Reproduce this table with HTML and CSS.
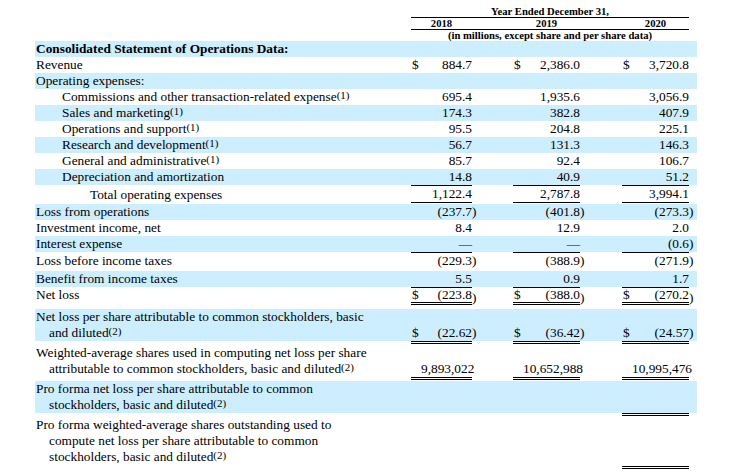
FILE: index.html
```html
<!DOCTYPE html>
<html lang="en">
<head>
<meta charset="utf-8">
<title>Consolidated Statement of Operations Data</title>
<link rel="stylesheet" href="styles.css">
</head>
<body>
<table class="fin">
  <colgroup>
    <col class="c-label"><col class="c-cur"><col class="c-num1"><col class="c-par"><col class="c-sp1">
    <col class="c-cur"><col class="c-num"><col class="c-par"><col class="c-sp2">
    <col class="c-cur"><col class="c-num"><col class="c-par">
  </colgroup>
  <thead>
    <tr class="h1">
      <td></td><th colspan="10" class="hl">Year Ended December 31,</th><td></td>
    </tr>
    <tr class="h2">
      <td></td>
      <th colspan="2" class="hl">2018</th><td colspan="2" class="hl"></td>
      <th colspan="2" class="hl">2019</th><td colspan="2" class="hl"></td>
      <th colspan="2" class="hl">2020</th><td></td>
    </tr>
    <tr class="h3">
      <td></td><th colspan="10">(in millions, except share and per share data)</th><td></td>
    </tr>
  </thead>
  <tbody>
    <tr class="sh">
      <td class="lbl b">Consolidated Statement of Operations Data:</td><td colspan="11"></td>
    </tr>
    <tr>
      <td class="lbl">Revenue</td>
      <td class="cur">$</td><td class="num">884.7</td><td></td><td></td>
      <td class="cur">$</td><td class="num">2,386.0</td><td></td><td></td>
      <td class="cur">$</td><td class="num">3,720.8</td><td></td>
    </tr>
    <tr class="sh">
      <td class="lbl">Operating expenses:</td><td colspan="11"></td>
    </tr>
    <tr>
      <td class="lbl i2">Commissions and other transaction-related expense<span class="fn">(1)</span></td>
      <td></td><td class="num">695.4</td><td></td><td></td>
      <td></td><td class="num">1,935.6</td><td></td><td></td>
      <td></td><td class="num">3,056.9</td><td></td>
    </tr>
    <tr class="sh">
      <td class="lbl i2">Sales and marketing<span class="fn">(1)</span></td>
      <td></td><td class="num">174.3</td><td></td><td></td>
      <td></td><td class="num">382.8</td><td></td><td></td>
      <td></td><td class="num">407.9</td><td></td>
    </tr>
    <tr>
      <td class="lbl i2">Operations and support<span class="fn">(1)</span></td>
      <td></td><td class="num">95.5</td><td></td><td></td>
      <td></td><td class="num">204.8</td><td></td><td></td>
      <td></td><td class="num">225.1</td><td></td>
    </tr>
    <tr class="sh">
      <td class="lbl i2">Research and development<span class="fn">(1)</span></td>
      <td></td><td class="num">56.7</td><td></td><td></td>
      <td></td><td class="num">131.3</td><td></td><td></td>
      <td></td><td class="num">146.3</td><td></td>
    </tr>
    <tr>
      <td class="lbl i2">General and administrative<span class="fn">(1)</span></td>
      <td></td><td class="num">85.7</td><td></td><td></td>
      <td></td><td class="num">92.4</td><td></td><td></td>
      <td></td><td class="num">106.7</td><td></td>
    </tr>
    <tr class="sh">
      <td class="lbl i2">Depreciation and amortization</td>
      <td></td><td class="num">14.8</td><td></td><td></td>
      <td></td><td class="num">40.9</td><td></td><td></td>
      <td></td><td class="num">51.2</td><td></td>
    </tr>
    <tr>
      <td class="lbl i4">Total operating expenses</td>
      <td class="t1 b1"></td><td class="num t1 b1">1,122.4</td><td></td><td></td>
      <td class="t1 b1"></td><td class="num t1 b1">2,787.8</td><td></td><td></td>
      <td class="t1 b1"></td><td class="num t1 b1">3,994.1</td><td></td>
    </tr>
    <tr class="sh g1">
      <td class="lbl">Loss from operations</td>
      <td></td><td class="num">(237.7</td><td class="par">)</td><td></td>
      <td></td><td class="num">(401.8</td><td class="par">)</td><td></td>
      <td></td><td class="num">(273.3</td><td class="par">)</td>
    </tr>
    <tr>
      <td class="lbl">Investment income, net</td>
      <td></td><td class="num">8.4</td><td></td><td></td>
      <td></td><td class="num">12.9</td><td></td><td></td>
      <td></td><td class="num">2.0</td><td></td>
    </tr>
    <tr class="sh">
      <td class="lbl">Interest expense</td>
      <td></td><td class="num">—</td><td></td><td></td>
      <td></td><td class="num">—</td><td></td><td></td>
      <td></td><td class="num">(0.6</td><td class="par">)</td>
    </tr>
    <tr class="pb2">
      <td class="lbl">Loss before income taxes</td>
      <td class="t1"></td><td class="num t1">(229.3</td><td class="par">)</td><td></td>
      <td class="t1"></td><td class="num t1">(388.9</td><td class="par">)</td><td></td>
      <td class="t1"></td><td class="num t1">(271.9</td><td class="par">)</td>
    </tr>
    <tr class="sh">
      <td class="lbl">Benefit from income taxes</td>
      <td></td><td class="num">5.5</td><td></td><td></td>
      <td></td><td class="num">0.9</td><td></td><td></td>
      <td></td><td class="num">1.7</td><td></td>
    </tr>
    <tr class="net">
      <td class="lbl">Net loss</td>
      <td class="cur t1 bd">$</td><td class="num t1 bd">(223.8</td><td class="par">)</td><td></td>
      <td class="cur t1 bd">$</td><td class="num t1 bd">(388.0</td><td class="par">)</td><td></td>
      <td class="cur t1 bd">$</td><td class="num t1 bd">(270.2</td><td class="par">)</td>
    </tr>
    <tr class="sh g4">
      <td class="lbl hang">Net loss per share attributable to common stockholders, basic and diluted<span class="fn">(2)</span></td>
      <td class="cur">$</td><td class="num">(22.62</td><td class="par">)</td><td></td>
      <td class="cur">$</td><td class="num">(36.42</td><td class="par">)</td><td></td>
      <td class="cur">$</td><td class="num">(24.57</td><td class="par">)</td>
    </tr>
    <tr class="wa">
      <td class="lbl hang">Weighted-average shares used in computing net loss per share attributable to common stockholders, basic and diluted<span class="fn">(2)</span></td>
      <td class="td bd"></td><td class="num td bd">9,893,022</td><td></td><td></td>
      <td class="td bd"></td><td class="num td bd">10,652,988</td><td></td><td></td>
      <td class="td bd"></td><td class="num td bd">10,995,476</td><td></td>
    </tr>
    <tr class="sh g1">
      <td class="lbl hang">Pro forma net loss per share attributable to common stockholders, basic and diluted<span class="fn">(2)</span></td>
      <td></td><td></td><td></td><td></td>
      <td></td><td></td><td></td><td></td>
      <td></td><td></td><td></td>
    </tr>
    <tr class="wa last">
      <td class="lbl hang">Pro forma weighted-average shares outstanding used to compute net loss per share attributable to common stockholders, basic and diluted<span class="fn">(2)</span></td>
      <td></td><td></td><td></td><td></td>
      <td></td><td></td><td></td><td></td>
      <td class="td bd"></td><td class="num td bd"></td><td></td>
    </tr>
  </tbody>
</table>
</body>
</html>
```

FILE: styles.css
```css
html, body {
  margin: 0;
  padding: 0;
  background: #ffffff;
}

body {
  font-family: "Liberation Serif", "Times New Roman", serif;
  font-size: 13.33px;
  color: #000000;
}

.fin {
  margin: 5px 0 0 35px;
  width: 662px;
  table-layout: fixed;
  border-collapse: separate;
  border-spacing: 0;
}

.c-label { width: 376px; }
.c-cur { width: 10px; }
.c-num1 { width: 51px; }
.c-num { width: 57px; }
.c-par { width: 8px; }
.c-sp1 { width: 33px; }
.c-sp2 { width: 34px; }

.fin td,
.fin th {
  padding: 0;
  line-height: 16px;
  vertical-align: bottom;
  white-space: nowrap;
}

/* header */
.fin thead th {
  font-size: 10.67px;
  font-weight: bold;
  text-align: center;
}

.h1 th, .h1 td { line-height: 12px; }
.h2 th, .h2 td, .h3 th, .h3 td { line-height: 11px; }

.hl { border-bottom: 1px solid #000; }

/* body cells */
.lbl {
  padding-left: 1px !important;
  padding-right: 38px !important;
  white-space: normal !important;
}

.b { font-weight: bold; }
.i2 { padding-left: 27px !important; }
.i4 { padding-left: 55px !important; }

.hang {
  padding-left: 14px !important;
  text-indent: -13px;
}

.num {
  text-align: right;
}

.cur {
  text-align: left;
  padding-left: 1px !important;
}

.par {
  text-align: left;
}

.fn {
  font-size: 11px;
  vertical-align: 2px;
  line-height: 12px;
}

/* shading */
.sh > td {
  background: #cceeff;
  background-clip: padding-box;
}

.g1 > td { border-top: 1px solid transparent; }
.g4 > td { border-top: 4px solid transparent; }

/* rules */
.t1 { border-top: 1px solid #000; }
.b1 { border-bottom: 1px solid #000; }
.td { border-top: 3px double #000; }
.bd { border-bottom: 3px double #000; }

.pb2 > td { padding-bottom: 2px; }

.net > td { line-height: 14px; }
.net > td.lbl { padding-top: 1px; padding-bottom: 3px; }

.wa > td.lbl {
  padding-top: 4px !important;
  padding-bottom: 3px !important;
}
.last > td.lbl { padding-bottom: 4px !important; }
```
